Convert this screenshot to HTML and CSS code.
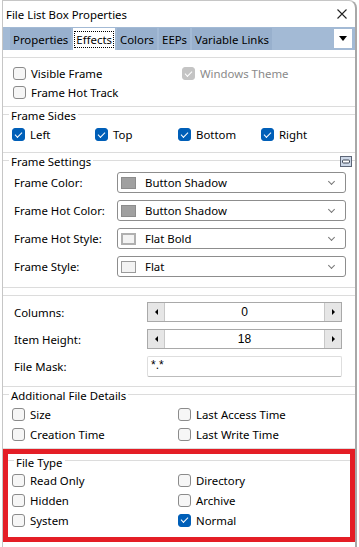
FILE: index.html
```html
<!DOCTYPE html>
<html lang="en">
<head>
  <meta charset="UTF-8" />
  <meta name="viewport" content="width=device-width, initial-scale=1.0"/>
  <title>File List Box Properties</title>
  <link rel="stylesheet" href="styles.css">
</head>
<body>

  <div class="window">
    <div class="titlebar">
      <span>File List Box Properties</span>
      <svg class="close" width="10" height="10" viewBox="0 0 10 10">
        <path d="M0.5 0.5 L9.5 9.5 M9.5 0.5 L0.5 9.5" stroke="#222" stroke-width="1.1" fill="none"/>
      </svg>
    </div>

    <div class="tabs">
      <span class="tab">Properties</span>
      <span class="tab active"><span class="focus">Effects</span></span>
      <span class="tab">Colors</span>
      <span class="tab">EEPs</span>
      <span class="tab">Variable Links</span>
      <span class="tab-menu">
        <svg width="8" height="5" viewBox="0 0 8 5"><path d="M0 0 H8 L4 5 Z" fill="#000"/></svg>
      </span>
    </div>

    <div class="panel">

      <div class="group">
        <div class="checks two first">
          <label class="check"><span class="box"></span>Visible Frame</label>
          <label class="check disabled"><span class="box on"></span>Windows Theme</label>
          <label class="check"><span class="box"></span>Frame Hot Track</label>
        </div>
      </div>

      <div class="group titled">
        <div class="group-title"><span>Frame Sides</span></div>
        <div class="checks four">
          <label class="check"><span class="box on"></span>Left</label>
          <label class="check"><span class="box on"></span>Top</label>
          <label class="check"><span class="box on"></span>Bottom</label>
          <label class="check"><span class="box on"></span>Right</label>
        </div>
      </div>

      <div class="group titled settings">
        <div class="group-title"><span>Frame Settings</span></div>
        <span class="collapse">
          <svg width="12" height="11" viewBox="0 0 12 11">
            <rect x="0.5" y="0.5" width="11" height="10" fill="#cdd8e8" stroke="#5d6677"/>
            <rect x="2.5" y="4" width="7" height="3" rx="1" fill="#fff" stroke="#3f4756"/>
          </svg>
        </span>
        <div class="fields combos">
          <span class="label">Frame Color:</span>
          <div class="combo"><span class="swatch gray"></span><span class="combo-text">Button Shadow</span><span class="chev"></span></div>
          <span class="label">Frame Hot Color:</span>
          <div class="combo"><span class="swatch gray"></span><span class="combo-text">Button Shadow</span><span class="chev"></span></div>
          <span class="label">Frame Hot Style:</span>
          <div class="combo"><span class="swatch bold"></span><span class="combo-text">Flat Bold</span><span class="chev"></span></div>
          <span class="label">Frame Style:</span>
          <div class="combo"><span class="swatch flat"></span><span class="combo-text">Flat</span><span class="chev"></span></div>
        </div>
      </div>

      <div class="group">
        <div class="fields spins">
          <span class="label">Columns:</span>
          <div class="spin"><span class="spin-btn left"></span><span class="spin-value">0</span><span class="spin-btn right"></span></div>
          <span class="label">Item Height:</span>
          <div class="spin"><span class="spin-btn left"></span><span class="spin-value">18</span><span class="spin-btn right"></span></div>
          <span class="label">File Mask:</span>
          <div class="text-input">*.*</div>
        </div>
      </div>

      <div class="group titled details">
        <div class="group-title"><span>Additional File Details</span></div>
        <div class="checks two">
          <label class="check"><span class="box"></span>Size</label>
          <label class="check"><span class="box"></span>Last Access Time</label>
          <label class="check"><span class="box"></span>Creation Time</label>
          <label class="check"><span class="box"></span>Last Write Time</label>
        </div>
      </div>

      <div class="highlight">
        <div class="group-title"><span>File Type</span></div>
        <div class="checks two">
          <label class="check"><span class="box"></span>Read Only</label>
          <label class="check"><span class="box"></span>Directory</label>
          <label class="check"><span class="box"></span>Hidden</label>
          <label class="check"><span class="box"></span>Archive</label>
          <label class="check"><span class="box"></span>System</label>
          <label class="check"><span class="box on"></span>Normal</label>
        </div>
      </div>

    </div>
  </div>

</body>
</html>
```

FILE: styles.css
```css
* {
  box-sizing: border-box;
}

body {
  margin: 0;
  font-family: "Noto Sans", sans-serif;
  font-size: 11.4px;
  color: #000;
  background: #fff;
}

.window {
  margin-left: 2px;
  width: 355px;
  height: 547px;
  border: 1px solid #c6c6c6;
  border-right: 2px solid #a8a8a8;
  border-bottom: 0;
  border-radius: 0 8px 0 0;
  overflow: hidden;
}

.titlebar {
  height: 26px;
  display: flex;
  align-items: center;
  justify-content: space-between;
  padding: 0 8px 0 3px;
}

.tabs {
  height: 23px;
  display: flex;
  align-items: stretch;
  padding: 1px 3px 0 7px;
  background: #a3bad5;
}

.tab {
  display: flex;
  align-items: center;
  padding: 0 3px;
  margin-right: 2px;
  background: #98b0cd;
}

.tab.active {
  background: #fff;
  padding: 0 1px;
}

.focus {
  border: 1px dotted #000;
  padding: 0 1px;
  line-height: 15px;
}

.tab-menu {
  margin: 1px 0 2px auto;
  width: 18px;
  background: #fff;
  display: flex;
  align-items: center;
  justify-content: center;
}

.panel {
  padding-top: 7px;
}

.group {
  border-top: 1px solid #dcdcdc;
  border-bottom: 1px solid #dcdcdc;
  margin-bottom: 7px;
}

.group.titled {
  border-top: 0;
}

.group-title {
  display: flex;
  height: 10px;
  gap: 2px;
}

.group-title::before,
.group-title::after {
  content: "";
  border-top: 1px solid #dcdcdc;
}

.group-title::before {
  width: 6px;
}

.group-title::after {
  flex: 1;
}

.group-title span {
  line-height: 16px;
  margin-top: -6px;
}

/* checkboxes */
.checks {
  display: grid;
  padding-left: 9px;
}

.checks.two {
  grid-template-columns: 166px 1fr;
  grid-auto-rows: 20px;
}

.checks.first {
  grid-template-columns: 169px 1fr;
  grid-auto-rows: 19px;
  padding: 6px 0 4px 10px;
}

.checks.four {
  grid-template-columns: repeat(4, 83px);
  grid-auto-rows: 19px;
  padding-top: 1px;
  padding-bottom: 8px;
}

.check {
  display: flex;
  align-items: center;
  gap: 5px;
}

.check.disabled {
  color: #8a8a8a;
}

.box {
  width: 13px;
  height: 13px;
  border: 1px solid #8b8b8b;
  border-radius: 3px;
  background: #f6f6f6;
  display: flex;
  align-items: center;
  justify-content: center;
}

.box.on {
  background: #005fb8;
  border-color: #005fb8;
}

.box.on::after {
  content: "";
  width: 6px;
  height: 3px;
  margin-top: -2px;
  border-left: 1.3px solid #fff;
  border-bottom: 1.3px solid #fff;
  transform: rotate(-45deg);
}

.disabled .box.on {
  background: #c4c4c4;
  border-color: #c4c4c4;
}

/* frame settings */
.settings {
  position: relative;
}

.collapse {
  position: absolute;
  right: 3px;
  top: -4px;
  display: flex;
}

.fields {
  display: grid;
  align-items: center;
  padding-left: 11px;
}

.combos {
  grid-template-columns: 103px 229px;
  grid-auto-rows: 21px;
  row-gap: 7px;
  padding-top: 2px;
  padding-bottom: 10px;
}

.combo {
  height: 21px;
  border: 1px solid #8d8d8d;
  border-radius: 3px;
  display: flex;
  align-items: center;
  padding-left: 3px;
}

.swatch {
  width: 15px;
  height: 12px;
  margin-right: 9px;
}

.swatch.gray {
  background: #a0a0a0;
  border: 1px solid #8c8c8c;
}

.swatch.bold {
  background: #f3f3f3;
  border: 2px solid #b0b0b0;
}

.swatch.flat {
  background: #f3f3f3;
  border: 1px solid #9a9a9a;
}

.combo-text {
  flex: 1;
}

.chev {
  width: 5px;
  height: 5px;
  margin: -3px 11px 0 0;
  border-right: 1px solid #777;
  border-bottom: 1px solid #777;
  transform: rotate(45deg);
}

/* spinners */
.spins {
  grid-template-columns: 133px 195px;
  grid-template-rows: 20px 20px 21px;
  row-gap: 7px;
  padding-top: 6px;
  padding-bottom: 9px;
}

.spin {
  height: 20px;
  display: flex;
  border: 1px solid #a9a9a9;
}

.spin-btn {
  width: 17px;
  background: #e6e6e6;
  display: flex;
  align-items: center;
  justify-content: center;
}

.spin-btn.left {
  border-right: 1px solid #c8c8c8;
}

.spin-btn.right {
  border-left: 1px solid #c8c8c8;
}

.spin-btn.left::after {
  content: "";
  border: 3px solid transparent;
  border-right: 3px solid #000;
  margin-left: -3px;
}

.spin-btn.right::after {
  content: "";
  border: 3px solid transparent;
  border-left: 3px solid #000;
  margin-right: -3px;
}

.spin-value {
  flex: 1;
  text-align: center;
  font-family: "Liberation Sans", sans-serif;
  font-size: 12px;
  line-height: 18px;
}

.text-input {
  height: 21px;
  border: 1px solid #dedede;
  border-bottom-color: #bcbcbc;
  border-radius: 2px;
  padding-left: 3px;
  line-height: 17px;
  font-family: "Liberation Sans", sans-serif;
  font-size: 12px;
}

/* additional details */
.details {
  margin-bottom: 0;
  padding-bottom: 4px;
}

/* file type, outlined */
.highlight {
  border: 5px solid #e41e26;
  padding-top: 6px;
  height: 93px;
}

.highlight .group-title {
  height: 10px;
}

.highlight .group-title span {
  margin-top: -5px;
}

.highlight .checks {
  padding-left: 4px;
}
```
